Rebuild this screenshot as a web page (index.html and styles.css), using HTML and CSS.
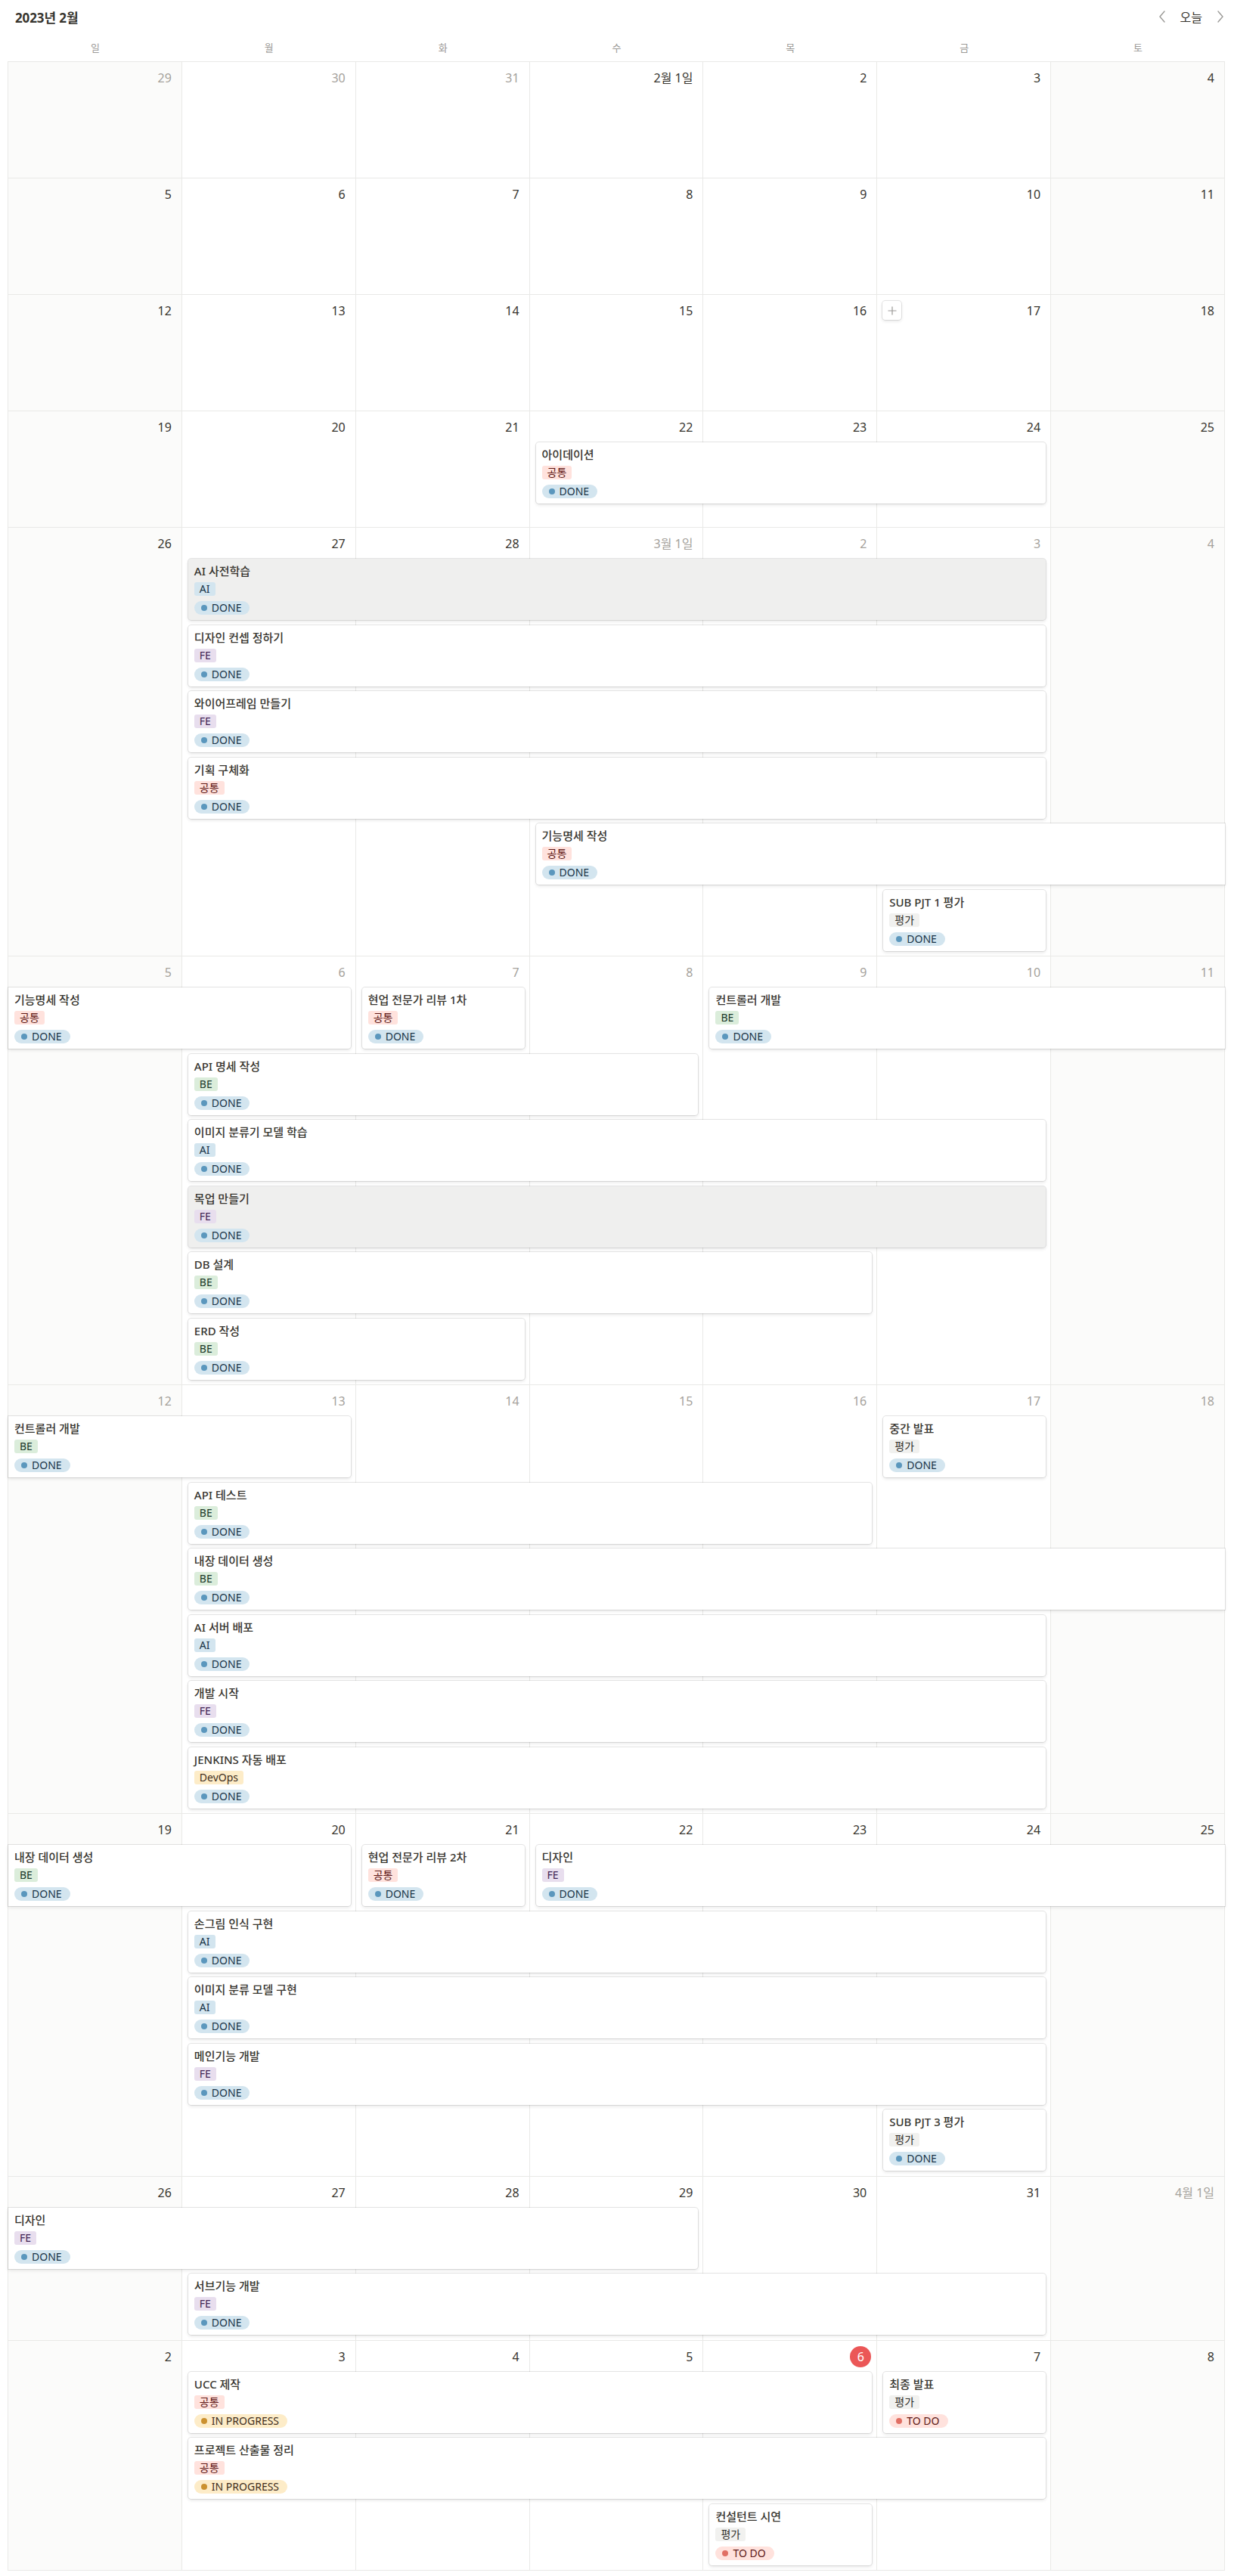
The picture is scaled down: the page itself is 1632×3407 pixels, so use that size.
FILE: index.html
```html
<!DOCTYPE html>
<html lang="ko">
<head>
<meta charset="utf-8">
<title>2023년 2월</title>
<link rel="stylesheet" href="styles.css">
</head>
<body>
<div class="app">
  <header class="topbar">
    <div class="title">2023년 2월</div>
    <div class="nav">
      <span class="chev"><svg width="12" height="18" viewBox="0 0 12 18"><path d="M9 2 L3 9 L9 16" fill="none" stroke="#9b9a97" stroke-width="1.4" stroke-linecap="round" stroke-linejoin="round"/></svg></span>
      <span class="today-btn">오늘</span>
      <span class="chev"><svg width="12" height="18" viewBox="0 0 12 18"><path d="M3 2 L9 9 L3 16" fill="none" stroke="#9b9a97" stroke-width="1.4" stroke-linecap="round" stroke-linejoin="round"/></svg></span>
    </div>
  </header>
  <div class="weekdays">
    <div>일</div><div>월</div><div>화</div><div>수</div><div>목</div><div>금</div><div>토</div>
  </div>
  <div class="calendar">

    <!-- Week 1 -->
    <div class="week l0">
      <div class="day d1 we"><span class="num dim">29</span></div>
      <div class="day d2"><span class="num dim">30</span></div>
      <div class="day d3"><span class="num dim">31</span></div>
      <div class="day d4"><span class="num">2월 1일</span></div>
      <div class="day d5"><span class="num">2</span></div>
      <div class="day d6"><span class="num">3</span></div>
      <div class="day d7 we"><span class="num">4</span></div>
    </div>

    <!-- Week 2 -->
    <div class="week l0">
      <div class="day d1 we"><span class="num">5</span></div>
      <div class="day d2"><span class="num">6</span></div>
      <div class="day d3"><span class="num">7</span></div>
      <div class="day d4"><span class="num">8</span></div>
      <div class="day d5"><span class="num">9</span></div>
      <div class="day d6"><span class="num">10</span></div>
      <div class="day d7 we"><span class="num">11</span></div>
    </div>

    <!-- Week 3 -->
    <div class="week l0">
      <div class="day d1 we"><span class="num">12</span></div>
      <div class="day d2"><span class="num">13</span></div>
      <div class="day d3"><span class="num">14</span></div>
      <div class="day d4"><span class="num">15</span></div>
      <div class="day d5"><span class="num">16</span></div>
      <div class="day d6 has-add"><span class="add-btn"><svg width="14" height="14" viewBox="0 0 14 14"><path d="M7 1.5 V12.5 M1.5 7 H12.5" stroke="#9b9a97" stroke-width="1.2" fill="none"/></svg></span><span class="num">17</span></div>
      <div class="day d7 we"><span class="num">18</span></div>
    </div>

    <!-- Week 4 -->
    <div class="week l1">
      <div class="day d1 we"><span class="num">19</span></div>
      <div class="day d2"><span class="num">20</span></div>
      <div class="day d3"><span class="num">21</span></div>
      <div class="day d4"><span class="num">22</span></div>
      <div class="day d5"><span class="num">23</span></div>
      <div class="day d6"><span class="num">24</span></div>
      <div class="day d7 we"><span class="num">25</span></div>
      <div class="ev c4 e7 lane1"><div class="ev-title">아이데이션</div><span class="tag t-common">공통</span><span class="status s-done"><i></i>DONE</span></div>
    </div>

    <!-- Week 5 -->
    <div class="week l6">
      <div class="day d1 we"><span class="num">26</span></div>
      <div class="day d2"><span class="num">27</span></div>
      <div class="day d3"><span class="num">28</span></div>
      <div class="day d4"><span class="num dim">3월 1일</span></div>
      <div class="day d5"><span class="num dim">2</span></div>
      <div class="day d6"><span class="num dim">3</span></div>
      <div class="day d7 we"><span class="num dim">4</span></div>
      <div class="ev c2 e7 lane1 hover"><div class="ev-title">AI 사전학습</div><span class="tag t-ai">AI</span><span class="status s-done"><i></i>DONE</span></div>
      <div class="ev c2 e7 lane2"><div class="ev-title">디자인 컨셉 정하기</div><span class="tag t-fe">FE</span><span class="status s-done"><i></i>DONE</span></div>
      <div class="ev c2 e7 lane3"><div class="ev-title">와이어프레임 만들기</div><span class="tag t-fe">FE</span><span class="status s-done"><i></i>DONE</span></div>
      <div class="ev c2 e7 lane4"><div class="ev-title">기획 구체화</div><span class="tag t-common">공통</span><span class="status s-done"><i></i>DONE</span></div>
      <div class="ev c4 e8 lane5 open-r"><div class="ev-title">기능명세 작성</div><span class="tag t-common">공통</span><span class="status s-done"><i></i>DONE</span></div>
      <div class="ev c6 e7 lane6"><div class="ev-title">SUB PJT 1 평가</div><span class="tag t-eval">평가</span><span class="status s-done"><i></i>DONE</span></div>
    </div>

    <!-- Week 6 -->
    <div class="week l6">
      <div class="day d1 we"><span class="num dim">5</span></div>
      <div class="day d2"><span class="num dim">6</span></div>
      <div class="day d3"><span class="num dim">7</span></div>
      <div class="day d4"><span class="num dim">8</span></div>
      <div class="day d5"><span class="num dim">9</span></div>
      <div class="day d6"><span class="num dim">10</span></div>
      <div class="day d7 we"><span class="num dim">11</span></div>
      <div class="ev c1 e3 lane1 open-l"><div class="ev-title">기능명세 작성</div><span class="tag t-common">공통</span><span class="status s-done"><i></i>DONE</span></div>
      <div class="ev c3 e4 lane1"><div class="ev-title">현업 전문가 리뷰 1차</div><span class="tag t-common">공통</span><span class="status s-done"><i></i>DONE</span></div>
      <div class="ev c5 e8 lane1 open-r"><div class="ev-title">컨트롤러 개발</div><span class="tag t-be">BE</span><span class="status s-done"><i></i>DONE</span></div>
      <div class="ev c2 e5 lane2"><div class="ev-title">API 명세 작성</div><span class="tag t-be">BE</span><span class="status s-done"><i></i>DONE</span></div>
      <div class="ev c2 e7 lane3"><div class="ev-title">이미지 분류기 모델 학습</div><span class="tag t-ai">AI</span><span class="status s-done"><i></i>DONE</span></div>
      <div class="ev c2 e7 lane4 hover"><div class="ev-title">목업 만들기</div><span class="tag t-fe">FE</span><span class="status s-done"><i></i>DONE</span></div>
      <div class="ev c2 e6 lane5"><div class="ev-title">DB 설계</div><span class="tag t-be">BE</span><span class="status s-done"><i></i>DONE</span></div>
      <div class="ev c2 e4 lane6"><div class="ev-title">ERD 작성</div><span class="tag t-be">BE</span><span class="status s-done"><i></i>DONE</span></div>
    </div>

    <!-- Week 7 -->
    <div class="week l6">
      <div class="day d1 we"><span class="num dim">12</span></div>
      <div class="day d2"><span class="num dim">13</span></div>
      <div class="day d3"><span class="num dim">14</span></div>
      <div class="day d4"><span class="num dim">15</span></div>
      <div class="day d5"><span class="num dim">16</span></div>
      <div class="day d6"><span class="num dim">17</span></div>
      <div class="day d7 we"><span class="num dim">18</span></div>
      <div class="ev c1 e3 lane1 open-l"><div class="ev-title">컨트롤러 개발</div><span class="tag t-be">BE</span><span class="status s-done"><i></i>DONE</span></div>
      <div class="ev c6 e7 lane1"><div class="ev-title">중간 발표</div><span class="tag t-eval">평가</span><span class="status s-done"><i></i>DONE</span></div>
      <div class="ev c2 e6 lane2"><div class="ev-title">API 테스트</div><span class="tag t-be">BE</span><span class="status s-done"><i></i>DONE</span></div>
      <div class="ev c2 e8 lane3 open-r"><div class="ev-title">내장 데이터 생성</div><span class="tag t-be">BE</span><span class="status s-done"><i></i>DONE</span></div>
      <div class="ev c2 e7 lane4"><div class="ev-title">AI 서버 배포</div><span class="tag t-ai">AI</span><span class="status s-done"><i></i>DONE</span></div>
      <div class="ev c2 e7 lane5"><div class="ev-title">개발 시작</div><span class="tag t-fe">FE</span><span class="status s-done"><i></i>DONE</span></div>
      <div class="ev c2 e7 lane6"><div class="ev-title">JENKINS 자동 배포</div><span class="tag t-devops">DevOps</span><span class="status s-done"><i></i>DONE</span></div>
    </div>

    <!-- Week 8 -->
    <div class="week l5">
      <div class="day d1 we"><span class="num">19</span></div>
      <div class="day d2"><span class="num">20</span></div>
      <div class="day d3"><span class="num">21</span></div>
      <div class="day d4"><span class="num">22</span></div>
      <div class="day d5"><span class="num">23</span></div>
      <div class="day d6"><span class="num">24</span></div>
      <div class="day d7 we"><span class="num">25</span></div>
      <div class="ev c1 e3 lane1 open-l"><div class="ev-title">내장 데이터 생성</div><span class="tag t-be">BE</span><span class="status s-done"><i></i>DONE</span></div>
      <div class="ev c3 e4 lane1"><div class="ev-title">현업 전문가 리뷰 2차</div><span class="tag t-common">공통</span><span class="status s-done"><i></i>DONE</span></div>
      <div class="ev c4 e8 lane1 open-r"><div class="ev-title">디자인</div><span class="tag t-fe">FE</span><span class="status s-done"><i></i>DONE</span></div>
      <div class="ev c2 e7 lane2"><div class="ev-title">손그림 인식 구현</div><span class="tag t-ai">AI</span><span class="status s-done"><i></i>DONE</span></div>
      <div class="ev c2 e7 lane3"><div class="ev-title">이미지 분류 모델 구현</div><span class="tag t-ai">AI</span><span class="status s-done"><i></i>DONE</span></div>
      <div class="ev c2 e7 lane4"><div class="ev-title">메인기능 개발</div><span class="tag t-fe">FE</span><span class="status s-done"><i></i>DONE</span></div>
      <div class="ev c6 e7 lane5"><div class="ev-title">SUB PJT 3 평가</div><span class="tag t-eval">평가</span><span class="status s-done"><i></i>DONE</span></div>
    </div>

    <!-- Week 9 -->
    <div class="week l2">
      <div class="day d1 we"><span class="num">26</span></div>
      <div class="day d2"><span class="num">27</span></div>
      <div class="day d3"><span class="num">28</span></div>
      <div class="day d4"><span class="num">29</span></div>
      <div class="day d5"><span class="num">30</span></div>
      <div class="day d6"><span class="num">31</span></div>
      <div class="day d7 we"><span class="num dim">4월 1일</span></div>
      <div class="ev c1 e5 lane1 open-l"><div class="ev-title">디자인</div><span class="tag t-fe">FE</span><span class="status s-done"><i></i>DONE</span></div>
      <div class="ev c2 e7 lane2"><div class="ev-title">서브기능 개발</div><span class="tag t-fe">FE</span><span class="status s-done"><i></i>DONE</span></div>
    </div>

    <!-- Week 10 -->
    <div class="week l3">
      <div class="day d1 we"><span class="num">2</span></div>
      <div class="day d2"><span class="num">3</span></div>
      <div class="day d3"><span class="num">4</span></div>
      <div class="day d4"><span class="num">5</span></div>
      <div class="day d5"><span class="num today">6</span></div>
      <div class="day d6"><span class="num">7</span></div>
      <div class="day d7 we"><span class="num">8</span></div>
      <div class="ev c2 e6 lane1"><div class="ev-title">UCC 제작</div><span class="tag t-common">공통</span><span class="status s-prog"><i></i>IN PROGRESS</span></div>
      <div class="ev c6 e7 lane1"><div class="ev-title">최종 발표</div><span class="tag t-eval">평가</span><span class="status s-todo"><i></i>TO DO</span></div>
      <div class="ev c2 e7 lane2"><div class="ev-title">프로젝트 산출물 정리</div><span class="tag t-common">공통</span><span class="status s-prog"><i></i>IN PROGRESS</span></div>
      <div class="ev c5 e6 lane3"><div class="ev-title">컨설턴트 시연</div><span class="tag t-eval">평가</span><span class="status s-todo"><i></i>TO DO</span></div>
    </div>

  </div>
</div>
</body>
</html>
```

FILE: styles.css
```css
* { box-sizing: border-box; }

html, body {
  margin: 0;
  padding: 0;
  background: #ffffff;
}

body {
  font-family: "Noto Sans", "Noto Sans CJK KR", sans-serif;
  color: #37352f;
}

.app {
  padding: 0 12px 0 10px;
}

/* Top bar */
.topbar {
  height: 44px;
  display: flex;
  align-items: center;
  justify-content: space-between;
  padding-left: 10px;
}

.title {
  font-size: 17px;
  font-weight: 700;
  color: #37352f;
  letter-spacing: -0.1px;
}

.nav {
  display: flex;
  align-items: center;
  gap: 18px;
}

.chev {
  display: flex;
  align-items: center;
  justify-content: center;
  width: 12px;
  height: 24px;
}

.today-btn {
  font-size: 16px;
  color: #37352f;
}

/* Weekday header */
.weekdays {
  height: 37px;
  display: grid;
  grid-template-columns: repeat(7, 1fr);
  align-items: center;
  padding-left: 1px;
}

.weekdays div {
  text-align: center;
  font-size: 13px;
  color: #9b9a97;
}

/* Calendar grid */
.calendar {
  border-top: 1px solid #e9e9e7;
  border-left: 1px solid #e9e9e7;
}

.week {
  display: grid;
  grid-template-columns: repeat(7, 1fr);
  min-height: 154px;
  border-bottom: 1px solid #e9e9e7;
}

.l0 { grid-template-rows: 41px 1fr; }
.l1 { grid-template-rows: 41px repeat(1, 87.5px) 1fr; }
.l2 { grid-template-rows: 41px repeat(2, 87.5px) 1fr; }
.l3 { grid-template-rows: 41px repeat(3, 87.5px) 1fr; }
.l5 { grid-template-rows: 41px repeat(5, 87.5px) 1fr; }
.l6 { grid-template-rows: 41px repeat(6, 87.5px) 1fr; }

.day {
  grid-row: 1 / -1;
  border-right: 1px solid #e9e9e7;
  display: flex;
  justify-content: flex-end;
  align-items: flex-start;
  padding: 7px 7px 0 0;
  background: #ffffff;
}

.day.we { background: #fbfbfa; }

.d1 { grid-column: 1; }
.d2 { grid-column: 2; }
.d3 { grid-column: 3; }
.d4 { grid-column: 4; }
.d5 { grid-column: 5; }
.d6 { grid-column: 6; }
.d7 { grid-column: 7; }

.num {
  height: 28px;
  line-height: 28px;
  padding: 0 6px;
  font-size: 16px;
  color: #37352f;
  white-space: nowrap;
}

.num.dim { color: #a5a29c; }

.num.today {
  min-width: 28px;
  padding: 0;
  border-radius: 50%;
  background: #eb5757;
  color: #ffffff;
  text-align: center;
}

.has-add {
  position: relative;
}

.add-btn {
  position: absolute;
  left: 7px;
  top: 8px;
  width: 25px;
  height: 25px;
  border-radius: 4px;
  background: #ffffff;
  box-shadow: rgba(15, 15, 15, 0.1) 0 0 0 1px, rgba(15, 15, 15, 0.1) 0 2px 4px;
  display: flex;
  align-items: center;
  justify-content: center;
}

/* Event placement */
.c1 { grid-column-start: 1; }
.c2 { grid-column-start: 2; }
.c3 { grid-column-start: 3; }
.c4 { grid-column-start: 4; }
.c5 { grid-column-start: 5; }
.c6 { grid-column-start: 6; }
.e3 { grid-column-end: 3; }
.e4 { grid-column-end: 4; }
.e5 { grid-column-end: 5; }
.e6 { grid-column-end: 6; }
.e7 { grid-column-end: 7; }
.e8 { grid-column-end: 8; }

.lane1 { grid-row: 2; }
.lane2 { grid-row: 3; }
.lane3 { grid-row: 4; }
.lane4 { grid-row: 5; }
.lane5 { grid-row: 6; }
.lane6 { grid-row: 7; }

/* Event card */
.ev {
  align-self: start;
  height: 81px;
  margin: 0 7px 0 8px;
  padding: 6px 8px 7px 8px;
  background: #ffffff;
  border-radius: 4px;
  box-shadow: rgba(15, 15, 15, 0.1) 0 0 0 1px, rgba(15, 15, 15, 0.1) 0 2px 4px;
  display: flex;
  flex-direction: column;
  align-items: flex-start;
  overflow: hidden;
}

.ev.hover { background: #efefee; }

.ev.open-l {
  margin-left: 0;
  border-top-left-radius: 0;
  border-bottom-left-radius: 0;
}

.ev.open-r {
  margin-right: 0;
  border-top-right-radius: 0;
  border-bottom-right-radius: 0;
}

.ev-title {
  font-size: 15px;
  line-height: 20px;
  font-weight: 500;
  color: #37352f;
  white-space: nowrap;
}

.tag {
  margin-top: 5px;
  height: 18px;
  line-height: 18px;
  padding: 0 7px;
  border-radius: 3px;
  font-size: 14px;
  white-space: nowrap;
}

.t-common { background: #ffe2dd; color: #5d1715; }
.t-ai { background: #d3e5ef; color: #183347; }
.t-fe { background: #e8deee; color: #412454; }
.t-be { background: #dbeddb; color: #1c3829; }
.t-eval { background: #f1f1ef; color: #32302c; }
.t-devops { background: #fdecc8; color: #402c1b; }

.status {
  margin-top: 7px;
  height: 18px;
  line-height: 18px;
  padding: 0 11px 0 9px;
  border-radius: 9px;
  font-size: 14px;
  display: inline-flex;
  align-items: center;
  gap: 6px;
  white-space: nowrap;
}

.status i {
  width: 8px;
  height: 8px;
  border-radius: 50%;
  display: block;
}

.s-done { background: #d3e5ef; color: #183347; }
.s-done i { background: #5b97bd; }
.s-prog { background: #fdecc8; color: #402c1b; }
.s-prog i { background: #cb912f; }
.s-todo { background: #ffe2dd; color: #5d1715; }
.s-todo i { background: #e16f64; }
```
